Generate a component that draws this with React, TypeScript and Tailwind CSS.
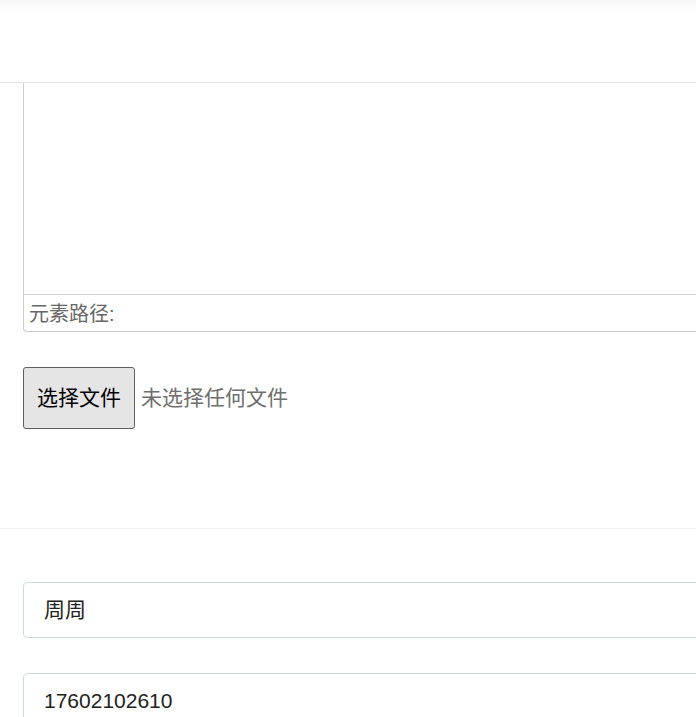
import React from 'react';

const cjk = "font-['Liberation_Sans','Noto_Sans_CJK_SC',sans-serif]";

// editor frame, top part hidden under the header
function Editor() {
  return (
    <div className="w-[720px] border-x border-b border-[#cccccc] rounded-bl-[4px]">
      <div className="h-[211px]" />
      <div className="h-[37px] border-t border-[#d4d4d4] pl-[5px] pt-[1px] flex items-center text-[20px] text-[#666666]">
        元素路径:
      </div>
    </div>
  );
}

function FileInput() {
  return (
    <div className="flex items-center mt-[35px]">
      <button
        type="button"
        className="w-[112px] h-[62px] bg-[#e5e5e5] border border-[#5f5f5f] rounded-[3px] text-[21px] text-black"
      >
        选择文件
      </button>
      <span className="ml-[6px] text-[21px] text-[#6e6e6e]">未选择任何文件</span>
    </div>
  );
}

function Field({ value }: { value: string }) {
  return (
    <div className="w-[720px] h-[56px] border border-[#cfdae3] rounded-[4px] pl-[20px] flex items-center text-[21px] text-[#222222]">
      {value}
    </div>
  );
}

export default function App() {
  return (
    <div className={`${cjk} w-[696px] h-[717px] overflow-hidden bg-white`}>
      <div className="h-[83px] border-b border-[#e3e3e3] bg-gradient-to-b from-[#f6f6f6] to-white to-[14%]" />
      <div className="pl-[23px]">
        <Editor />
        <FileInput />
      </div>
      <div className="mt-[99px] border-t border-[#efefef]" />
      <div className="pl-[23px] pt-[53px] flex flex-col gap-[35px]">
        <Field value="周周" />
        <Field value="17602102610" />
      </div>
    </div>
  );
}
